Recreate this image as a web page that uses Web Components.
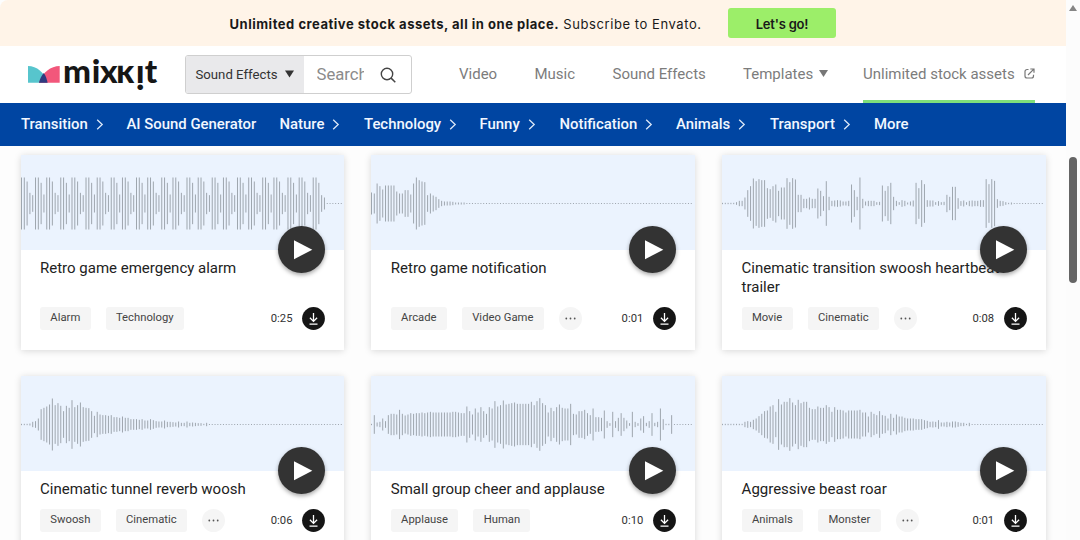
<!DOCTYPE html>
<html lang="en">
<head>
<meta charset="utf-8">
<title>Mixkit – Sound Effects</title>
<style>
html,body{margin:0;height:100%;overflow:hidden;background:#fdfdfd;font-family:Roboto,"Liberation Sans",sans-serif}
</style>
</head>
<body>
<mk-page></mk-page>
<script>
const define = (name, html, after) => customElements.define(name, class extends HTMLElement {
  connectedCallback() {
    if (this.shadowRoot) return;
    const t = document.createElement('template');
    t.innerHTML = typeof html === 'function' ? html(this) : html;
    this.attachShadow({mode: 'open'}).append(t.content.cloneNode(true));
    if (after) after(this);
  }
});

// Half heights of the waveform bars, 78 = full amplitude
const rep = (v, n) => Array(n).fill(v);
const WAVES = {
  alarm: [...Array.from({length: 107}, (_, i) => [78,78,66,32,25,78,78,62,27][i % 9]), 25, 18],
  notification: [33,30,60,52,42,54,54,54,54,36,30,30,40,40,27,60,78,70,66,64,25,30,24,20,13,8,6,6,6,5,3,3,3,3],
  heartbeat: [2,2,2,2,2,4,8,8,18,40,52,75,67,73,70,70,46,43,52,57,38,48,48,76,64,76,72,26,26,14,14,18,14,14,45,38,22,67,20,8,9,10,9,6,6,8,57,40,20,78,14,6,8,8,8,4,5,54,38,52,62,20,8,4,10,8,3,6,9,62,46,70,58,10,9,9,4,7,4,5,26,20,50,50,16,7,9,4,8,9,8,8,10,10,73,58,73,68,13,8,7,4,2,3],
  tunnel: [2,2,2,3,8,10,18,46,50,54,60,78,58,64,56,40,56,50,73,52,58,66,52,50,49,40,26,38,30,28,28,26,28,22,22,20,24,20,20,16,16,16,14,16,12,12,16,13,10,9,9,12,8,8,7,6,9,5,5,9,5,6,5,4,4,2,5],
  applause: [2,28,6,8,18,10,28,32,32,30,44,32,27,30,34,32,34,34,36,34,36,38,...rep(36,7),38,38,36,34,34,54,40,30,48,36,52,40,32,52,48,70,54,58,72,60,62,64,66,62,62,62,62,62,68,58,70,79,64,58,36,50,40,52,60,50,48,48,62,32,30,40,40,44,34,28,48,22,22,20,42,10,4,38,10,20,34,20,12,4,38,8,4,18,25,5,10,34,5,8,48,16,2,2,28],
  beast: [...rep(2,8),8,10,8,14,18,25,32,40,42,54,58,38,76,60,68,68,79,66,58,74,64,68,68,50,46,46,54,50,50,58,52,38,52,44,44,42,36,42,42,42,42,44,36,36,24,38,32,28,40,28,26,18,32,20,30,24,24,20,18,18,18,16,16,16,13,11,8,9,8,13,6,6,8,6,9,9,7,5,5,2,5]
};

define('mk-waveform', el => {
  const w = WAVES[el.getAttribute('name')];
  let d = '';
  for (let i = 0; i < 115; i++) {
    const h = Math.max((w[i] || 1.5) / 3, .5);
    d += `M${(i * 2.805 + .5).toFixed(2)} ${(48.5 - h).toFixed(2)}v${(2 * h).toFixed(2)}`;
  }
  return `<style>:host{display:block;height:94.5px;background:#ebf3fe;overflow:hidden}svg{display:block}</style>
  <svg width="323" height="94"><path d="${d}" stroke="#9aa1aa" stroke-width=".95" fill="none"/></svg>`;
});

define('mk-tag', `<style>:host{display:block;height:23px;line-height:22px;padding:0 10.3px;border-radius:3px;background:#f5f5f5;color:#444;font-size:11.25px;letter-spacing:.02px;box-sizing:border-box;white-space:nowrap}
:host([more]){width:23px;padding:0;border-radius:50%;display:grid;place-items:center}</style><slot></slot>`);

define('mk-card', el => {
  const tags = el.getAttribute('tags').split(',').map(t => `<mk-tag>${t}</mk-tag>`).join('');
  const more = el.hasAttribute('more') ? `<mk-tag more><svg width="11" height="3" style="display:block"><g fill="#555"><circle cx="1.3" cy="1.5" r=".9"/><circle cx="5.5" cy="1.5" r=".9"/><circle cx="9.7" cy="1.5" r=".9"/></g></svg></mk-tag>` : '';
  return `<style>
  :host{display:flex;flex-direction:column;position:relative;background:#fff;box-shadow:0 1px 7px rgba(0,0,0,.15);box-sizing:border-box;padding-bottom:20px}
  h2{margin:9px 19px 0 19.5px;font-size:15px;font-weight:400;line-height:19px;color:#222}
  .meta{margin:auto 19px 0 19.5px;padding-top:10px;display:flex;align-items:center}
  .tags{display:flex;gap:15px;flex:1}
  time{font-size:11.25px;color:#333;margin-right:9.5px}
  .dl{display:block}
  .play{position:absolute;right:19px;top:70.5px;width:47px;height:47px;border-radius:50%;background:#333;box-shadow:0 2px 4px rgba(0,0,0,.35);display:grid;place-items:center}
  </style>
  <mk-waveform name="${el.getAttribute('wave')}"></mk-waveform>
  <h2><slot></slot></h2>
  <div class="meta"><div class="tags">${tags}${more}</div><time>${el.getAttribute('time')}</time>
  <svg class="dl" width="23" height="23" viewBox="0 0 23 23"><circle cx="11.5" cy="11.5" r="11.4" fill="#151515"/><path d="M11.5 6v8M7.9 10.8l3.6 3.6 3.6-3.6M7.5 17.2h8" fill="none" stroke="#fff" stroke-width="1.3"/></svg></div>
  <div class="play"><svg width="47" height="47"><path d="M16 14.2v19l18.3-9.5z" fill="#fff"/></svg></div>`;
});

define('mk-banner', `<style>
:host{display:flex;height:46px;background:#fff4e8;align-items:center;box-sizing:border-box;padding:0 0 0 229.5px;font-family:Inter,sans-serif;color:#191919;font-size:13px;border-radius:8px 0 0 0}
p{margin:0;width:498.5px;white-space:nowrap;padding-top:2px;letter-spacing:.57px}
b{font-weight:700;letter-spacing:.52px}
a{width:108px;height:30px;border-radius:3px;background:#9cee69;display:grid;place-items:center;font-weight:600;letter-spacing:-.2px;padding-top:1px;box-sizing:border-box}
</style><p><b>Unlimited creative stock assets, all in one place.</b> Subscribe to Envato.</p><a>Let's go!</a>`);

define('mk-logo', `<style>:host{display:block}svg{display:block}text{font:900 33px Lato,sans-serif;fill:#161616}</style>
<svg width="134" height="57" viewBox="26 46 134 57">
<path d="M28 66c9 .2 16 6 19.5 16.700H28z" fill="#57c5cd"/><path d="M59.700 66c-9 .2-17 6-20.700 16.700h20.700z" fill="#f2577b"/><path d="M43.800 73c-2.200 2.600-3.800 5.600-4.800 9.700h8.600c-.8-4-2-7-3.800-9.700z" fill="#2f3b80"/>
<text x="63" y="82.700" textLength="28" lengthAdjust="spacingAndGlyphs">m</text>
<text x="91.700" y="82.700">i</text>
<text x="99.900" y="82.700">x</text>
<clipPath id="k"><rect x="110" y="65.700" width="30" height="20"/></clipPath>
<g clip-path="url(#k)"><text x="116.200" y="82.700">k</text></g>
<text transform="rotate(180 140 74.300)" x="135.500" y="82.700">i</text>
<text x="144.800" y="82.700">t</text></svg>`);

define('mk-search', `<style>
:host{display:flex;width:227px;height:39.500px;box-sizing:border-box;border:1px solid #cfcfcf;border-radius:3px;overflow:hidden;align-items:stretch;background:#fff}
.kind{width:117.500px;background:#e9e9eb;box-sizing:border-box;padding-left:9.500px;display:flex;align-items:center;font-size:13.200px;color:#333;gap:7.500px}
.q{width:47px;margin-left:13px;overflow:hidden;font-size:16.700px;color:#8b8b8b;line-height:38px;white-space:nowrap}
.ic{margin:11px 0 0 16.500px}
</style><div class="kind"><span>Sound Effects</span><svg width="9" height="8"><path d="M0 .5h9L4.500 7.500z" fill="#333"/></svg></div><div class="q">Search</div>
<svg class="ic" width="17" height="17"><circle cx="7" cy="7" r="5.700" fill="none" stroke="#444" stroke-width="1.400"/><path d="M11.100 11.100l4.200 4.200" stroke="#444" stroke-width="1.500"/></svg>`);

define('mk-header', `<style>
:host{display:flex;height:57px;background:#fff;align-items:stretch;padding-left:26px;box-sizing:border-box}
mk-logo{width:159px}mk-search{margin-top:8.500px;flex:none}
nav{display:grid;grid-template-columns:75.500px 78px 130.500px 120px 172px;margin-left:47px;font-size:15px;color:#7c7c7c;white-space:nowrap}
nav a{display:flex;align-items:center;box-sizing:border-box;padding-top:1px;border-bottom:3px solid transparent}
nav a svg{margin-left:6px}nav .u{border-bottom-color:#7fdf7a;justify-content:space-between}
</style><mk-logo></mk-logo><mk-search></mk-search>
<nav><a>Video</a><a>Music</a><a>Sound Effects</a><a>Templates<svg width="9" height="7"><path d="M0 0h9L4.500 7z" fill="#777"/></svg></a>
<a class="u">Unlimited stock assets<svg width="11" height="11"><path d="M4.500 1.500H3A2 2 0 0 0 1 3.500V8a2 2 0 0 0 2 2h4.500a2 2 0 0 0 2-2V6.800M4 7L9.800 1.200M6.300 1H10v3.700" fill="none" stroke="#777" stroke-width="1.200"/></svg></a></nav>`);

define('mk-category', el => `<style>:host{display:flex;align-items:center;gap:8px}svg{margin-top:1px}</style><slot></slot>${el.hasAttribute('plain') ? '' : '<svg width="8" height="11"><path d="M1.200.700l5 4.800-5 4.800" fill="none" stroke="#dce8f8" stroke-width="1.300"/></svg>'}`);

define('mk-categories', `<style>:host{display:grid;grid-template-columns:105.500px 153px 84.500px 115.500px 80px 116.500px 94px 104px auto;height:43px;background:#0045a2;padding:0 0 1.500px 21px;color:#f2f7ff;font-size:14.900px;font-weight:500;box-sizing:border-box;white-space:nowrap}</style>
<mk-category>Transition</mk-category><mk-category plain>AI Sound Generator</mk-category><mk-category>Nature</mk-category><mk-category>Technology</mk-category><mk-category>Funny</mk-category><mk-category>Notification</mk-category><mk-category>Animals</mk-category><mk-category>Transport</mk-category><mk-category plain>More</mk-category>`);

define('mk-scrollbar', `<style>:host{display:flex;flex-direction:column;align-items:center;width:14px;background:#fcfcfc;height:540px}
svg{margin-top:5px}i{width:8px;height:126px;border-radius:4px;background:#656565;margin-top:146px}</style><svg width="8" height="6"><path d="M4 0L8 6H0z" fill="#858585"/></svg><i></i>`);

define('mk-page', `<style>
:host{display:grid;grid-template-columns:1066px 14px;height:540px;overflow:hidden}
main{height:540px;overflow:hidden}
section{display:grid;grid-template-columns:repeat(3,323.500px);column-gap:27.300px;row-gap:26.500px;padding:9px 0 0 20.500px;grid-template-rows:194.500px 176px}
</style>
<main><mk-banner></mk-banner><mk-header></mk-header><mk-categories></mk-categories>
<section>
<mk-card wave="alarm" tags="Alarm,Technology" time="0:25">Retro game emergency alarm</mk-card>
<mk-card wave="notification" tags="Arcade,Video Game" more time="0:01">Retro game notification</mk-card>
<mk-card wave="heartbeat" tags="Movie,Cinematic" more time="0:08">Cinematic transition swoosh heartbeat trailer</mk-card>
<mk-card wave="tunnel" tags="Swoosh,Cinematic" more time="0:06">Cinematic tunnel reverb woosh</mk-card>
<mk-card wave="applause" tags="Applause,Human" time="0:10">Small group cheer and applause</mk-card>
<mk-card wave="beast" tags="Animals,Monster" more time="0:01">Aggressive beast roar</mk-card>
</section></main><mk-scrollbar></mk-scrollbar>`);
</script>
</body>
</html>
